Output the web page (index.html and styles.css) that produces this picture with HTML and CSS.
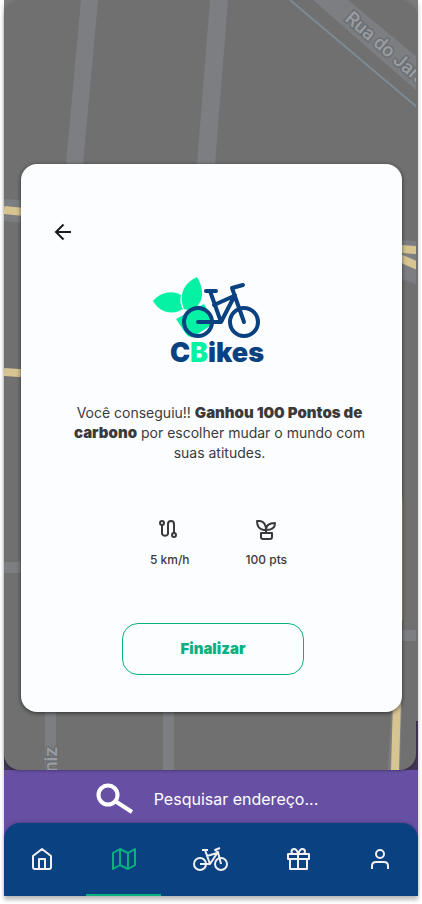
FILE: index.html
```html
<!DOCTYPE html>
<html lang="pt-BR">
<head>
<meta charset="utf-8">
<meta name="viewport" content="width=device-width, initial-scale=1">
<title>CBikes</title>
<link rel="stylesheet" href="styles.css">
</head>
<body>
<div class="app">
  <main class="stage">
    <div class="map-layer">
      <svg class="map" viewBox="0 0 414 770" preserveAspectRatio="xMinYMin slice" aria-hidden="true">
        <rect width="414" height="770" fill="#707070"/>
        <g fill="#7d7e82">
          <path d="M77 0H94L79 164 60 380H44L62 164Z"/>
          <path d="M206 0H224L211 164H193Z"/>
          <path d="M309 0H344L414 58V92Z"/>
          <path d="M0 199L30 201V224L0 221Z"/>
          <path d="M0 562H30V573H0Z"/>
          <path d="M380 239L414 241V285L380 272Z"/>
          <path d="M390 630H414V641H390Z"/>
          <path d="M41 700H52V770H41ZM159 700H170V770H159Z"/>
          <path d="M388 700H398L396 770H384Z"/>
        </g>
        <path d="M286 0L414 108" stroke="#7c8b94" stroke-width="2"/>
        <g stroke="#d6c491" stroke-width="8">
          <path d="M0 210L30 213M0 372L30 374M380 248L414 250M380 251L414 266M393 700L391 770"/>
        </g>
        <path d="M398 495L399 505V620H397Z" fill="#a0946f"/>
        <g class="map-text">
          <text transform="translate(340 20) rotate(41)">Rua do Jaraguá</text>
          <text transform="translate(53 772) rotate(-90)">niz</text>
        </g>
      </svg>
    </div>
    <section class="card" aria-label="Resultado">
      <button class="back" type="button" aria-label="Voltar">
        <svg width="24" height="24" viewBox="0 0 24 24" fill="none" stroke="#1c1b1f" stroke-width="2"><path d="M20 12H5M12.5 4.5L5 12l7.500 7.500"/></svg>
      </button>
      <div class="logo">
        <svg width="110" height="62" viewBox="0 0 110 62" fill="none" aria-hidden="true">
          <g fill="#05f2a5">
            <path d="M0 24C7 15 20 13 28 18Q26 26 30 32C19 39 6 35 0 24Z"/>
            <path d="M44 0C51 12 52 25 39 34L31 32C25 18 31 6 44 0Z"/>
            <path d="M23 42L51 27L57 37V49L40 60Q36 61 33 57Z"/>
          </g>
          <g stroke="#0a4181" stroke-width="4" stroke-linecap="round" stroke-linejoin="round">
            <circle cx="45" cy="45" r="14"/><circle cx="91" cy="45" r="14"/>
            <path d="M45 45H68L82 18M79 11L91 45M68 45L57 14M53 14H63M61 28L81 19M79 11L90 8"/>
          </g>
        </svg>
        <h1 class="brand">C<span class="brand-accent">B</span>ikes</h1>
      </div>
      <p class="message">Você conseguiu!! <strong>Ganhou 100 Pontos de carbono</strong> por escolher mudar o mundo com suas atitudes.</p>
      <ul class="stats">
        <li class="stat">
          <svg width="24" height="24" viewBox="0 0 24 24" fill="none" stroke="#3a3a3c" stroke-width="2" stroke-linecap="round"><circle cx="4" cy="5" r="2"/><circle cx="16" cy="17" r="2"/><path d="M4 7V16a3.500 3.500 0 0 0 6 0V6a3 3 0 0 1 6 0V15"/></svg>
          5 km/h
        </li>
        <li class="stat">
          <svg width="24" height="24" viewBox="0 0 24 24" fill="none" stroke="#3a3a3c" stroke-width="2" stroke-linejoin="round"><path d="M3 3H6Q12 4 12 12H10Q3 11 3 3ZM12 12Q12 5 21 5Q21 12 12 12ZM12 11V15M7 15H18V19Q18 21 16 21H9Q7 21 7 19Z"/></svg>
          100 pts
        </li>
      </ul>
      <button class="finish" type="button">Finalizar</button>
    </section>
  </main>
  <button class="search" type="button">
    <svg width="38" height="32" viewBox="0 0 38 32" fill="none" stroke="#fff" stroke-width="4" aria-hidden="true"><circle cx="12" cy="12" r="9.500"/><path d="M19 18L36 29"/></svg>
    Pesquisar endereço...
  </button>
  <nav class="tabs" aria-label="Principal">
    <a class="tab" href="#inicio" aria-label="Início">
      <svg width="24" height="24" viewBox="0 0 24 24"><path d="M3 9L12 2l9 7v11a2 2 0 0 1-2 2H5a2 2 0 0 1-2-2ZM9 22V12h6v10"/></svg>
    </a>
    <a class="tab tab-active" href="#mapa" aria-label="Mapa" aria-current="page">
      <svg width="26" height="24" viewBox="0 0 26 24"><path d="M2 6v16l7-4 8 4 7-4V2l-7 4-8-4ZM9 2v16M17 6v16"/></svg>
    </a>
    <a class="tab" href="#bikes" aria-label="Bicicletas">
      <svg width="36" height="24" viewBox="0 0 36 24"><circle cx="7" cy="17" r="6"/><circle cx="28" cy="17" r="6"/><path d="M7 17H17L25 5 28 17M17 17L12 3M9 3H15M14 9L24 6M25 5L22 3 27 1"/></svg>
    </a>
    <a class="tab" href="#premios" aria-label="Prêmios">
      <svg width="24" height="24" viewBox="0 0 24 24"><path d="M4 12v10h17V12M2 7h21v5H2ZM12 7v15M12 7H8a2.500 2.500 0 1 1 0-5c3 0 4 5 4 5ZM12 7h4.500a2.500 2.500 0 1 0 0-5c-3 0-4 5-4 5Z"/></svg>
    </a>
    <a class="tab" href="#perfil" aria-label="Perfil">
      <svg width="24" height="24" viewBox="0 0 24 24"><circle cx="12" cy="7" r="4"/><path d="M4 22V19q0-4 4-4h8q4 0 4 4v3"/></svg>
    </a>
  </nav>
</div>
</body>
</html>
```
FILE: styles.css
```css
* {
  box-sizing: border-box;
}

body {
  margin: 0;
  padding: 0 4px 8px;
  background: #fff;
  color: #3a3a3c;
  font-family: Inter, "Liberation Sans", sans-serif;
}

button {
  border: 0;
  background: none;
  font: inherit;
  cursor: pointer;
}

svg {
  display: block;
}

.app {
  display: flex;
  flex-direction: column;
  background: #6750a4;
  box-shadow: 0 4px 4px rgba(0, 0, 0, 0.25);
}

.stage {
  position: relative;
  padding: 164px 16px 58px 17px;
  background: linear-gradient(to top, #423557 49px, #7a7a7a 49px);
}

.map-layer {
  position: absolute;
  inset: 0 2px 0 0;
  overflow: hidden;
  border-radius: 16px;
  box-shadow: 0 1px 3px rgba(0, 0, 0, 0.3);
}

.map {
  width: 100%;
  height: 100%;
}

.map-text {
  fill: #999ca0;
  stroke: #6b6f74;
  stroke-width: 3px;
  paint-order: stroke;
  font: 500 19px Roboto, sans-serif;
}

.card {
  position: relative;
  display: flex;
  flex-direction: column;
  align-items: center;
  padding: 56px 30px 37px;
  border-radius: 16px;
  background: #fcfdff;
  box-shadow: 0 1px 4px rgba(0, 0, 0, 0.6);
}

.back {
  align-self: flex-start;
  padding: 0;
}

.logo {
  display: flex;
  flex-direction: column;
  align-items: flex-start;
  margin: 33px 6px 0 0;
}

.brand {
  margin: 0 0 0 17px;
  color: #0a4181;
  font: 900 27px/28px Inter, sans-serif;
}

.brand-accent {
  color: #05f2a5;
}

.message {
  max-width: 300px;
  margin: 36px 0 0 16px;
  font-size: 14px;
  line-height: 20px;
  text-align: center;
}

.message strong {
  font-size: 15px;
  font-weight: 900;
}

.stats {
  display: flex;
  gap: 56px;
  margin: 55px 0 0 14px;
  padding: 0;
  list-style: none;
}

.stat {
  display: flex;
  flex-direction: column;
  align-items: center;
  gap: 10px;
  font-weight: 500;
  font-size: 12px;
  line-height: 16px;
}

.finish {
  width: 182px;
  height: 52px;
  margin: 55px 0 0 3px;
  border: 1px solid #08b17f;
  border-radius: 16px;
  color: #08b17f;
  font-weight: 900;
  font-size: 15px;
  line-height: 20px;
}

.search {
  display: flex;
  align-items: center;
  justify-content: center;
  gap: 20px;
  height: 53px;
  padding: 4px 8px 0 0;
  color: #fff;
  font-size: 16px;
  line-height: 24px;
}

.tabs {
  display: grid;
  grid-template-columns: 76px repeat(3, 1fr) 76px;
  height: 73px;
  border-radius: 16px 16px 0 0;
  background: #0a4181;
  box-shadow: 0 -1px 3px rgba(0, 0, 0, 0.2);
}

.tab {
  display: flex;
  align-items: center;
  justify-content: center;
  margin: 0 6px;
  border-bottom: 2px solid transparent;
  color: #f1eff2;
}

.tab svg {
  fill: none;
  stroke: currentColor;
  stroke-width: 2;
  stroke-linejoin: round;
}

.tab-active {
  border-color: #08b17f;
  color: #08b17f;
}
```
